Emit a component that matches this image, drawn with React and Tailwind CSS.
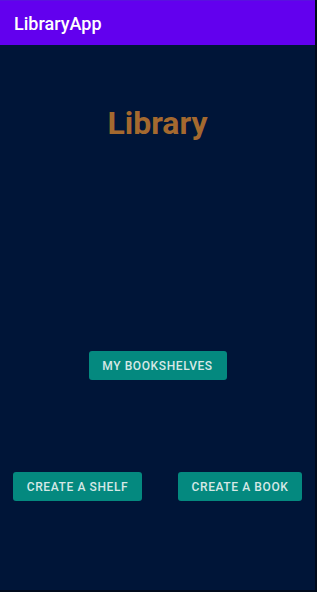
export default function App() {
  return (
    <div
      className="flex h-[592px] w-[317px] flex-col overflow-hidden border-r-2 border-b-2 border-[#000a1c] bg-[#001538]"
      style={{ fontFamily: "Roboto, 'Liberation Sans', sans-serif" }}
    >
      <div className="flex h-[45px] shrink-0 items-center border-t border-[#5a10e0] bg-[#6200ee] pl-[14px]">
        <span className="text-[18px] font-medium text-white">LibraryApp</span>
      </div>

      <div className="mt-[58px] flex justify-center">
        <h1 className="text-[32px] font-bold leading-[40px] text-[#a4692f]">Library</h1>
      </div>

      <div className="mt-[208px] flex justify-center">
        <button className="h-[29px] w-[138px] rounded-[3px] bg-[#04897f] text-[12px] font-medium tracking-[0.6px] text-[#d6e8e6]">
          MY BOOKSHELVES
        </button>
      </div>

      <div className="mt-[92px] flex justify-between pl-[13px] pr-[13px]">
        <button className="h-[29px] w-[129px] rounded-[3px] bg-[#04897f] text-[12px] font-medium tracking-[0.6px] text-[#d6e8e6]">
          CREATE A SHELF
        </button>
        <button className="h-[29px] w-[124px] rounded-[3px] bg-[#04897f] text-[12px] font-medium tracking-[0.6px] text-[#d6e8e6]">
          CREATE A BOOK
        </button>
      </div>
    </div>
  );
}
